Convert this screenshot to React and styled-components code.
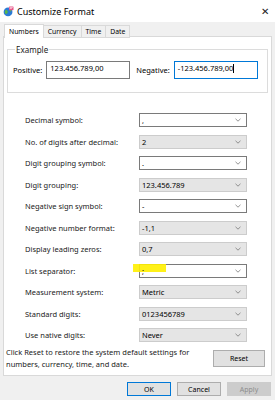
import styled, { createGlobalStyle } from "styled-components"

const Global = createGlobalStyle`
  html, body { margin: 0; padding: 0; }
  body {
    background: #f0f0f0;
    font-family: "Noto Sans", "Open Sans", sans-serif;
    color: #000;
  }
`;

const Window = styled.div`
  width: 275px;
  height: 400px;
  background: #f0f0f0;
  display: flex;
  flex-direction: column;
  font-size: 7.5px;
  overflow: hidden;
`;

const TitleBar = styled.div`
  height: 22px;
  background: #fff;
  display: flex;
  align-items: center;
  padding: 0 6px 0 3px;
  font-size: 9px;
  color: #000;
`;

const Title = styled.span`
  margin-left: 3px;
  flex: 1;
`;

const Close = styled.span`
  font-size: 10px;
  color: #222;
  font-weight: 300;
`;

const Tabs = styled.div`
  display: flex;
  margin: 2px 3px 0 4px;
  height: 12px;
  position: relative;
  z-index: 1;
`;

const Tab = styled.div`
  padding: 0 4px;
  height: ${p => (p.$active ? "13px" : "11px")};
  margin-top: ${p => (p.$active ? "0" : "1px")};
  background: ${p => (p.$active ? "#fff" : "#f0f0f0")};
  border: 1px solid #d9d9d9;
  border-bottom: ${p => (p.$active ? "none" : "1px solid #d9d9d9")};
  border-left: ${p => (p.$active || p.$first ? "1px solid #d9d9d9" : "none")};
  display: flex;
  align-items: center;
  font-size: 6.8px;
`;

const Panel = styled.div`
  margin: 0 3px 0 3px;
  height: 340px;
  background: #fff;
  border: 1px solid #d9d9d9;
  display: flex;
  flex-direction: column;
  padding: 7px 3px 0 3px;
  box-sizing: border-box;
`;

const Group = styled.fieldset`
  margin: 0;
  padding: 2px 6px 0 5px;
  border: 1px solid #dcdcdc;
  height: 49px;
  box-sizing: border-box;
  display: flex;
  align-items: flex-start;
  gap: 6px;
`;

const Legend = styled.legend`
  padding: 0 1px;
  margin-left: 2px;
  font-size: 8px;
  color: #222;
`;

const Pair = styled.div`
  display: flex;
  align-items: center;
  gap: 4px;
  margin-top: 4px;
`;

const TextBox = styled.div`
  width: 84px;
  height: 18px;
  box-sizing: border-box;
  border: 1px solid ${p => (p.$focus ? "#0078d7" : "#7a7a7a")};
  padding: 1px 3px;
  font-size: 7.5px;
  display: flex;
  align-items: flex-start;
`;

const Caret = styled.span`
  display: inline-block;
  width: 1px;
  height: 9px;
  background: #000;
  margin-top: 1px;
`;

const Rows = styled.div`
  display: flex;
  flex-direction: column;
  gap: 7.5px;
  margin-top: 20px;
  padding-left: 18px;
`;

const Row = styled.div`
  display: flex;
  align-items: center;
  height: 14px;
`;

const Label = styled.span`
  width: 114px;
  color: #1a1a1a;
`;

const Select = styled.div`
  width: 108px;
  height: 14px;
  box-sizing: border-box;
  border: 1px solid ${p => (p.$edit ? "#7a7a7a" : "#cccccc")};
  background: ${p => (p.$edit ? "#fff" : "#e5e5e5")};
  display: flex;
  align-items: center;
  padding: 0 5px 0 2px;
  position: relative;
`;

const Value = styled.span`
  flex: 1;
  position: relative;
`;

const Highlight = styled.span`
  position: absolute;
  left: -9px;
  top: -2px;
  width: 33px;
  height: 8px;
  background: #ffef00;
  opacity: 0.9;
`;

const ValueText = styled.span`
  position: relative;
`;

const Chevron = () => (
  <svg width="6" height="4" viewBox="0 0 6 4">
    <path d="M0.5 0.8 L3 3.2 L5.5 0.8" fill="none" stroke="#777" strokeWidth="0.8" />
  </svg>
);

const Footer = styled.div`
  margin-top: auto;
  margin-bottom: 5px;
  display: flex;
  align-items: center;
  justify-content: space-between;
  padding: 0 3px 0 0;
`;

const Note = styled.div`
  line-height: 12px;
  margin-left: -1px;
  color: #1a1a1a;
`;

const Button = styled.div`
  width: ${p => p.$w || 44}px;
  height: ${p => p.$h || 14}px;
  box-sizing: border-box;
  border: 1px solid ${p => (p.$primary ? "#0078d7" : p.$disabled ? "#cccccc" : "#adadad")};
  background: ${p => (p.$disabled ? "#cccccc" : "#e1e1e1")};
  color: ${p => (p.$disabled ? "#8d8d8d" : "#000")};
  display: flex;
  align-items: center;
  justify-content: center;
  font-size: 7px;
`;

const Buttons = styled.div`
  display: flex;
  justify-content: flex-end;
  gap: 6px;
  margin: 6px 4px 0 0;
`;

const GlobeIcon = () => (
  <svg width="11" height="11" viewBox="0 0 12 12">
    <circle cx="5.5" cy="6.5" r="4.8" fill="#2b7bd6" />
    <path d="M2.2 5 Q4 3.5 5 5.5 Q6 7 4 8.5 Q2.8 9 2 7.5 Z" fill="#59b84a" />
    <path d="M6.5 3 Q8.5 3.5 9.5 5.5 L8 6 Q7 4.5 6.5 3 Z" fill="#59b84a" />
    <rect x="6.5" y="0.5" width="5" height="4" rx="0.6" fill="#e85a8a" />
    <rect x="7.3" y="1.3" width="3.4" height="0.6" fill="#fff" />
    <rect x="7.3" y="2.6" width="2.4" height="0.6" fill="#fff" />
  </svg>
);

const rows = [
  ["Decimal symbol:", ",", true],
  ["No. of digits after decimal:", "2", false],
  ["Digit grouping symbol:", ".", true],
  ["Digit grouping:", "123.456.789", false],
  ["Negative sign symbol:", "-", true],
  ["Negative number format:", "-1,1", false],
  ["Display leading zeros:", "0,7", false],
  ["List separator:", ";", true, true],
  ["Measurement system:", "Metric", false],
  ["Standard digits:", "0123456789", false],
  ["Use native digits:", "Never", false],
];

export default function App() {
  return (
    <Window>
      <Global />
      <TitleBar>
        <GlobeIcon />
        <Title>Customize Format</Title>
        <Close>✕</Close>
      </TitleBar>
      <Tabs>
        <Tab $active $first>Numbers</Tab>
        <Tab>Currency</Tab>
        <Tab>Time</Tab>
        <Tab>Date</Tab>
      </Tabs>
      <Panel>
        <Group>
          <Legend>Example</Legend>
          <Pair>
            <span>Positive:</span>
            <TextBox>123.456.789,00</TextBox>
          </Pair>
          <Pair>
            <span>Negative:</span>
            <TextBox $focus>
              -123.456.789,00<Caret />
            </TextBox>
          </Pair>
        </Group>
        <Rows>
          {rows.map(([label, value, edit, mark]) => (
            <Row key={label}>
              <Label>{label}</Label>
              <Select $edit={edit}>
                <Value>
                  {mark && <Highlight />}
                  <ValueText>{value}</ValueText>
                </Value>
                <Chevron />
              </Select>
            </Row>
          ))}
        </Rows>
        <Footer>
          <Note>
            Click Reset to restore the system default settings for
            <br />
            numbers, currency, time, and date.
          </Note>
          <Button $w={52} $h={17}>Reset</Button>
        </Footer>
      </Panel>
      <Buttons>
        <Button $primary>OK</Button>
        <Button>Cancel</Button>
        <Button $disabled>Apply</Button>
      </Buttons>
    </Window>
  );
}
